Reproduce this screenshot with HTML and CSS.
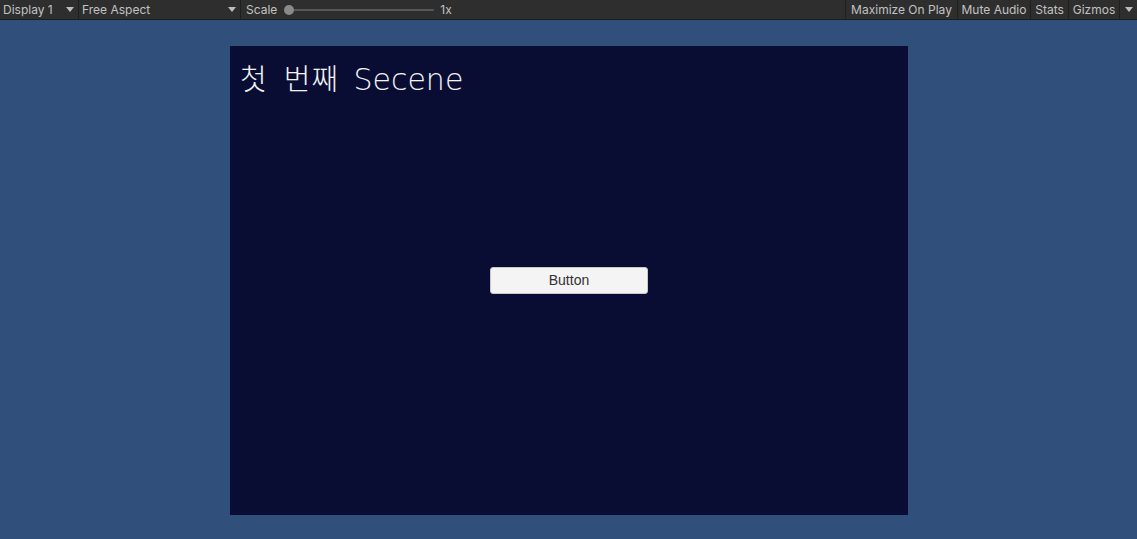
FILE: index.html
```html
<!DOCTYPE html>
<html lang="ko">
<head>
<meta charset="utf-8">
<link rel="stylesheet" href="styles.css">
</head>
<body>
<div class="toolbar">
  <div class="tb-item dd w-display"><span>Display 1</span><span class="arrow"></span></div>
  <div class="tb-item dd w-aspect"><span>Free Aspect</span><span class="arrow"></span></div>
  <div class="tb-item scale">
    <span>Scale</span>
    <div class="slider"><div class="knob"></div></div>
    <span class="x">1x</span>
  </div>
  <div class="spacer"></div>
  <div class="tb-item btn w-max">Maximize On Play</div>
  <div class="tb-item btn w-mute">Mute Audio</div>
  <div class="tb-item btn w-stats">Stats</div>
  <div class="tb-item btn w-gizmos">Gizmos</div>
  <div class="tb-item gz-arrow"><span class="arrow"></span></div>
</div>
<div class="stage">
  <div class="game">
    <div class="title"><span class="ko">첫 번째</span> <span class="latin">Secene</span></div>
    <div class="center">
      <div class="ui-button">Button</div>
    </div>
  </div>
</div>
</body>
</html>
```

FILE: styles.css
```css
html, body {
  margin: 0;
  padding: 0;
  width: 1137px;
  height: 539px;
  overflow: hidden;
  background: #30507b;
}
.toolbar {
  display: flex;
  align-items: stretch;
  height: 19px;
  background: #2e2e2e;
  border-bottom: 1px solid #1c1c1c;
  font-family: Inter, "Liberation Sans", sans-serif;
  font-size: 12px;
  color: #c2c2c2;
}
.tb-item {
  display: flex;
  align-items: center;
  box-sizing: border-box;
  border-right: 1px solid #1f1f1f;
  white-space: nowrap;
}
.dd {
  justify-content: space-between;
  padding: 0 4px 0 3px;
}
.w-display { width: 79px; }
.w-aspect { width: 162px; }
.arrow {
  width: 0;
  height: 0;
  border-left: 4px solid transparent;
  border-right: 4px solid transparent;
  border-top: 5px solid #bdbdbd;
}
.scale {
  border-right: none;
  padding-left: 5px;
}
.slider {
  position: relative;
  width: 145px;
  height: 2px;
  background: #575757;
  margin-left: 12px;
  border-radius: 1px;
}
.knob {
  position: absolute;
  left: -5px;
  top: -4px;
  width: 10px;
  height: 10px;
  border-radius: 50%;
  background: #8a8a8a;
}
.x { margin-left: 6px; }
.spacer { flex: 1; border-right: 1px solid #1f1f1f; }
.btn { justify-content: center; flex: none; }
.w-max { width: 112px; }
.w-mute { width: 73px; }
.w-stats { width: 38px; }
.w-gizmos { width: 51px; }
.gz-arrow {
  border-right: none;
  width: 17px;
  flex: none;
  justify-content: center;
}
.stage {
  padding: 26px 0 0 230px;
}
.game {
  width: 678px;
  height: 469px;
  background: #0a0d33;
  display: flex;
  flex-direction: column;
}
.title {
  padding: 13px 0 0 10px;
  font-size: 29px;
  line-height: 36px;
  color: #f4f4f4;
  white-space: nowrap;
  word-spacing: 7px;
}
.ko {
  font-family: "Noto Sans CJK KR", sans-serif;
  font-weight: 300;
  letter-spacing: 1px;
}
.latin {
  font-family: "DejaVu Sans", sans-serif;
  font-weight: 200;
  font-size: 30px;
}
.center {
  flex: 1;
  display: flex;
  align-items: center;
  justify-content: center;
  padding-bottom: 53px;
}
.ui-button {
  width: 158px;
  height: 27px;
  box-sizing: border-box;
  background: #f4f4f4;
  border: 1px solid #c8c8c8;
  border-radius: 3px;
  display: flex;
  align-items: center;
  justify-content: center;
  font-family: "Liberation Sans", Arial, sans-serif;
  font-size: 14px;
  color: #323232;
}
```
